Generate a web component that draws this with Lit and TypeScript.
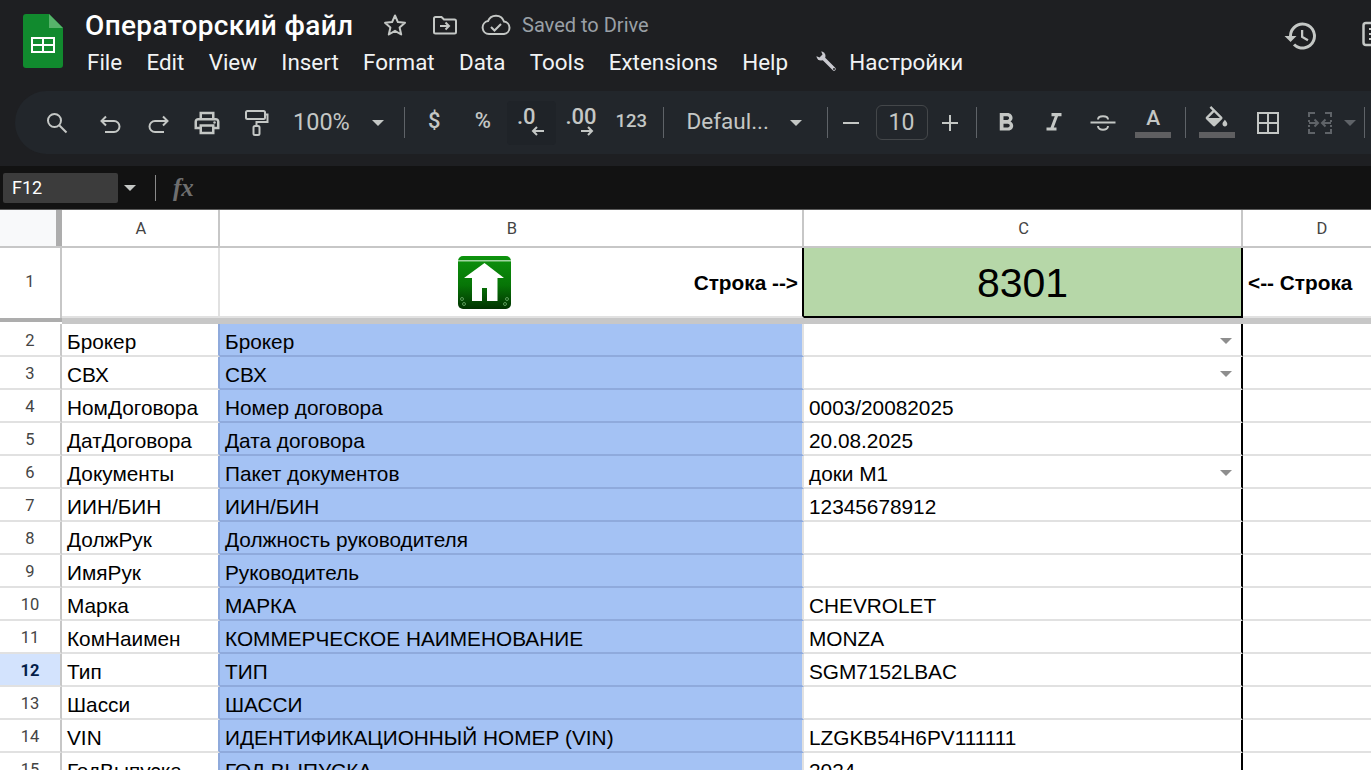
import { LitElement, html, css, svg } from 'lit';
import { customElement } from 'lit/decorators.js';

type Row = { n: number; a: string; b: string; c: string; dd?: boolean; active?: boolean };

const ROWS: Row[] = [
  { n: 2, a: 'Брокер', b: 'Брокер', c: '', dd: true },
  { n: 3, a: 'СВХ', b: 'СВХ', c: '', dd: true },
  { n: 4, a: 'НомДоговора', b: 'Номер договора', c: '0003/20082025' },
  { n: 5, a: 'ДатДоговора', b: 'Дата договора', c: '20.08.2025' },
  { n: 6, a: 'Документы', b: 'Пакет документов', c: 'доки М1', dd: true },
  { n: 7, a: 'ИИН/БИН', b: 'ИИН/БИН', c: '12345678912' },
  { n: 8, a: 'ДолжРук', b: 'Должность руководителя', c: '' },
  { n: 9, a: 'ИмяРук', b: 'Руководитель', c: '' },
  { n: 10, a: 'Марка', b: 'МАРКА', c: 'CHEVROLET' },
  { n: 11, a: 'КомНаимен', b: 'КОММЕРЧЕСКОЕ НАИМЕНОВАНИЕ', c: 'MONZA' },
  { n: 12, a: 'Тип', b: 'ТИП', c: 'SGM7152LBAC', active: true },
  { n: 13, a: 'Шасси', b: 'ШАССИ', c: '' },
  { n: 14, a: 'VIN', b: 'ИДЕНТИФИКАЦИОННЫЙ НОМЕР (VIN)', c: 'LZGKB54H6PV111111' },
  { n: 15, a: 'ГодВыпуска', b: 'ГОД ВЫПУСКА', c: '2024' },
];

const MENU = ['File', 'Edit', 'View', 'Insert', 'Format', 'Data', 'Tools', 'Extensions', 'Help'];

const icon = (size: number, view: number, body: unknown) => html`
  <svg width=${size} height=${size} viewBox="0 0 ${view} ${view}" class="ic">${body}</svg>
`;

const ICONS = {
  logo: html`<svg width="40" height="54" viewBox="0 0 40 54">
    <path fill="#118a2e" d="M3 0h23l14 14v37a3 3 0 0 1-3 3H3a3 3 0 0 1-3-3V3a3 3 0 0 1 3-3z"/>
    <path fill="#57b36b" d="M26 0l14 14H26z"/>
    <path fill="#fff" d="M8 23h24v16H8zm2 2v5h9v-5zm11 0v5h9v-5zM10 32v5h9v-5zm11 0v5h9v-5z" fill-rule="evenodd"/>
  </svg>`,
  star: icon(26, 26, svg`<path fill="none" stroke="#c4c7c5" stroke-width="2" stroke-linejoin="round" d="M13 3.500l2.900 6.600 7.100.7-5.400 4.700 1.600 7-6.200-3.700-6.200 3.700 1.600-7L3 10.800l7.100-.7z"/>`),
  folder: icon(26, 26, svg`<path fill="none" stroke="#c4c7c5" stroke-width="2" d="M2 6.500a1.500 1.500 0 0 1 1.500-1.500h6l2.500 2.500h10.500a1.500 1.500 0 0 1 1.500 1.500v11a1.500 1.500 0 0 1-1.500 1.500h-19a1.500 1.500 0 0 1-1.500-1.500z"/><path fill="none" stroke="#c4c7c5" stroke-width="2" d="M8 14h9M13.500 10.500L17 14l-3.500 3.500"/>`),
  cloud: html`<svg width="30" height="24" viewBox="0 0 30 24"><path fill="none" stroke="#c4c7c5" stroke-width="2" d="M8 21a6.500 6.500 0 0 1-1-12.900A8.500 8.500 0 0 1 23 8.500 6.300 6.300 0 0 1 23 21z"/><path fill="none" stroke="#c4c7c5" stroke-width="2" d="M10 14l3.500 3.500L20 11"/></svg>`,
  history: icon(36, 24, svg`<path fill="#c4c7c5" d="M13 3a9 9 0 0 0-9 9H1l3.900 3.900.1.100L9 12H6a7 7 0 1 1 2.050 4.950l-1.420 1.420A9 9 0 1 0 13 3zm-1 5v5l4.250 2.520.77-1.280-3.520-2.090V8z"/>`),
  panel: html`<svg width="9" height="32" viewBox="0 0 9 32"><rect x="1.500" y="5" width="24" height="22" rx="2.500" fill="none" stroke="#c4c7c5" stroke-width="2.500"/><path stroke="#c4c7c5" stroke-width="2" d="M7 11h14M7 16h14M7 21h14"/></svg>`,
  wrench: html`<svg width="22" height="22" viewBox="0 0 22 22"><path stroke="#c9c9cf" stroke-width="3.500" stroke-linecap="round" d="M6 6l12 12"/><circle cx="5" cy="5" r="4.500" fill="#c9c9cf"/><path fill="#1e1f22" d="M0 0h5l1.500 3.500L3.500 6.500 0 5z"/><circle cx="18" cy="18" r="1" fill="#1e1f22"/></svg>`,
  search: icon(28, 28, svg`<circle cx="11.500" cy="11.500" r="6.500" fill="none" stroke="#c4c7c5" stroke-width="2"/><path stroke="#c4c7c5" stroke-width="2" d="M16.200 16.200l7.300 7.300"/>`),
  undo: icon(28, 28, svg`<path fill="none" stroke="#c4c7c5" stroke-width="2" d="M10 7.500L5.500 12l4.500 4.500M5.500 12H18a5 5 0 0 1 0 11H9"/>`),
  redo: icon(28, 28, svg`<path fill="none" stroke="#c4c7c5" stroke-width="2" d="M18 7.500l4.500 4.500-4.500 4.500M22.500 12H10a5 5 0 0 0 0 11h9"/>`),
  print: icon(30, 24, svg`<path fill="#c4c7c5" d="M19 8h-1V3H6v5H5c-1.660 0-3 1.340-3 3v6h4v4h12v-4h4v-6c0-1.660-1.340-3-3-3zM8 5h8v3H8V5zm8 12v2H8v-4h8v2zm2-2v-2H6v2H4v-4c0-.55.45-1 1-1h14c.55 0 1 .45 1 1v4h-2z"/><circle cx="18" cy="11.500" r="1" fill="#c4c7c5"/>`),
  paint: icon(30, 30, svg`<g fill="none" stroke="#c4c7c5" stroke-width="2"><rect x="5" y="3" width="19" height="8" rx="1.500"/><path d="M24 6.500h2.500V14H15.500v4"/><rect x="12.500" y="18" width="6" height="9" rx="1.500"/></g>`),
  caret: html`<span class="caret"></span>`,
  arrowL: html`<svg width="14" height="10" viewBox="0 0 14 10"><path fill="none" stroke="#c4c7c5" stroke-width="2" d="M13 5H2M6 1L2 5l4 4"/></svg>`,
  arrowR: html`<svg width="14" height="10" viewBox="0 0 14 10"><path fill="none" stroke="#c4c7c5" stroke-width="2" d="M1 5h11M8 1l4 4-4 4"/></svg>`,
  minus: icon(28, 28, svg`<path stroke="#c4c7c5" stroke-width="2" d="M6 14h16"/>`),
  plus: icon(28, 28, svg`<path stroke="#c4c7c5" stroke-width="2" d="M6 14h16M14 6v16"/>`),
  bold: icon(30, 24, svg`<path fill="#c4c7c5" d="M15.600 10.790c.97-.67 1.650-1.770 1.650-2.790 0-2.260-1.750-4-4-4H7v14h7.040c2.090 0 3.710-1.700 3.710-3.790 0-1.520-.86-2.820-2.150-3.420zM10 6.500h3c.83 0 1.500.67 1.500 1.500s-.67 1.500-1.500 1.500h-3v-3zm3.500 9H10v-3h3.500c.83 0 1.500.67 1.500 1.500s-.67 1.500-1.500 1.500z"/>`),
  italic: icon(30, 24, svg`<path fill="#c4c7c5" d="M10 4v2.500h2.600L9.200 15.500H6V18h8v-2.500h-2.200l3.400-9H18V4z"/>`),
  strike: icon(30, 30, svg`<g fill="none" stroke="#c4c7c5" stroke-width="2"><path d="M2.500 14.500h25"/><path d="M10 11.500c0-4.500 10-4.500 10 0"/><path d="M10 18c0 5 10 5 10 0"/></g>`),
  fill: html`<svg width="29" height="24" viewBox="0 0 24 20" class="ic"><path fill="#c4c7c5" d="M16.560 8.940L7.620 0 6.210 1.410l2.380 2.380-5.150 5.150c-.59.59-.59 1.540 0 2.120l5.500 5.500c.29.29.68.44 1.060.44s.77-.15 1.060-.44l5.500-5.500c.59-.58.59-1.530 0-2.120zM5.210 10L10 5.210 14.790 10H5.210zM19 11.500s-2 2.170-2 3.500c0 1.100.9 2 2 2s2-.9 2-2c0-1.330-2-3.500-2-3.500z"/><path fill="#c4c7c5" d="M4 10h12l-6 6z"/></svg>`,
  borders: icon(26, 26, svg`<path fill="none" stroke="#c4c7c5" stroke-width="2" d="M3 3h20v20H3zM13 3v20M3 13h20"/>`),
  merge: icon(30, 30, svg`<g fill="none" stroke="#5f6368" stroke-width="2"><path d="M10 5H4v4M4 12v2M4 17v2M4 21v4h6M20 5h6v4M26 12v2M26 17v2M26 21v4h-6"/><path d="M4 15h9M9.500 11.500L13 15l-3.500 3.500M26 15h-9M20.500 11.500L17 15l3.500 3.500"/></g>`),
};

@customElement('app-root')
export class AppRoot extends LitElement {
  private renderTopbar() {
    return html`
      <header class="top">
        <div class="logo">${ICONS.logo}</div>
        <div class="titles">
          <div class="title-row">
            <span class="doc-title">Операторский файл</span>
            <span class="star">${ICONS.star}</span>
            <span class="folder">${ICONS.folder}</span>
            <span class="cloud">${ICONS.cloud}</span>
            <span class="saved">Saved to Drive</span>
          </div>
          <nav class="menu">
            ${MENU.map((m) => html`<span>${m}</span>`)}
            <span class="custom">${ICONS.wrench}Настройки</span>
          </nav>
        </div>
        <div class="top-right">
          ${ICONS.history}
          ${ICONS.panel}
        </div>
      </header>
    `;
  }

  private renderToolbar() {
    return html`
      <div class="toolbar-wrap">
        <div class="toolbar">
          <span class="b">${ICONS.search}</span>
          <span class="b ml4">${ICONS.undo}</span>
          <span class="b">${ICONS.redo}</span>
          <span class="b">${ICONS.print}</span>
          <span class="b">${ICONS.paint}</span>
          <span class="txt zoom">100%</span>
          <span class="ml21">${ICONS.caret}</span>
          <span class="sep s20"></span>

          <span class="b ml5 t bold-ish up">$</span>
          <span class="b t bold-ish up">%</span>
          <span class="b hover dec">
            <span class="t bold-ish dec-text">.0</span>
            <span class="dec-arrow">${ICONS.arrowL}</span>
          </span>
          <span class="b dec">
            <span class="t bold-ish dec-text">.00</span>
            <span class="dec-arrow">${ICONS.arrowR}</span>
          </span>
          <span class="b ml3 t num up">123</span>
          <span class="sep s7"></span>

          <span class="txt font">Defaul...</span>
          <span class="ml21">${ICONS.caret}</span>
          <span class="sep s25"></span>

          <span class="n ml3">${ICONS.minus}</span>
          <span class="size">10</span>
          <span class="n ml2">${ICONS.plus}</span>
          <span class="sep s6"></span>

          <span class="b ml5">${ICONS.bold}</span>
          <span class="b">${ICONS.italic}</span>
          <span class="b">${ICONS.strike}</span>
          <span class="b color ml2">
            <span class="color-a">A</span>
            <span class="bar"></span>
          </span>
          <span class="sep s7"></span>

          <span class="b ml7 color">
            ${ICONS.fill}
            <span class="bar"></span>
          </span>
          <span class="b ml3">${ICONS.borders}</span>
          <span class="b ml3">${ICONS.merge}</span>
          <span class="caret dim"></span>
          <span class="sep s8"></span>
        </div>
      </div>
    `;
  }

  private renderFormula() {
    return html`
      <div class="formula">
        <div class="namebox">F12</div>
        <span class="name-caret">${ICONS.caret}</span>
        <span class="fsep"></span>
        <span class="fx">fx</span>
      </div>
    `;
  }

  private renderGrid() {
    return html`
      <div class="grid">
        <div class="corner"><span class="corner-bar"></span></div>
        <div class="ch">A</div>
        <div class="ch">B</div>
        <div class="ch">C</div>
        <div class="ch">D</div>

        <div class="rh r1">1</div>
        <div class="c r1"></div>
        <div class="c r1 blk home-cell">
          <svg class="home" width="53" height="53" viewBox="0 0 53 53">
            <defs>
              <linearGradient id="hg" x1="0" y1="0" x2="0" y2="1">
                <stop offset="0" stop-color="#0d930d" />
                <stop offset="0.55" stop-color="#077507" />
                <stop offset="1" stop-color="#013301" />
              </linearGradient>
            </defs>
            <rect width="53" height="53" rx="5" fill="url(#hg)" />
            <rect y="4" width="53" height="1.500" fill="#9fd59f" />
            <path fill="#fff" d="M26.500 7L46 22h-6.500v23H29V32h-5v13H14V22H6z" />
            <g fill="none" stroke="#6fb06f" stroke-width="0.800">
              <circle cx="4" cy="43" r="1.500" /><circle cx="6" cy="48" r="1.500" />
              <circle cx="49" cy="43" r="1.500" /><circle cx="47" cy="48" r="1.500" />
            </g>
          </svg>
          <span class="strong">Строка --&gt;</span>
        </div>
        <div class="c r1 green blk">8301</div>
        <div class="c r1"><span class="strong">&lt;-- Строка</span></div>

        <div class="fz-head"></div>
        <div class="fz"></div>

        ${ROWS.map((r) => html`
          <div class="rh ${r.active ? 'active' : ''}">${r.n}</div>
          <div class="c bleft">${r.a}</div>
          <div class="c blue">${r.b}</div>
          <div class="c blk">
            ${r.c}
            ${r.dd ? html`<span class="dd"></span>` : ''}
          </div>
          <div class="c"></div>
        `)}
      </div>
    `;
  }

  override render() {
    return html`
      ${this.renderTopbar()}
      ${this.renderToolbar()}
      ${this.renderFormula()}
      ${this.renderGrid()}
    `;
  }

  static override styles = css`
    :host {
      display: block;
      width: 1371px;
      height: 770px;
      overflow: hidden;
      background: #fff;
      font-family: Roboto, "Liberation Sans", sans-serif;
    }
    svg {
      display: block;
      flex: none;
    }

    /* title + menu */
    .top {
      height: 90px;
      box-sizing: border-box;
      background: #1e1f22;
      display: flex;
      padding-left: 23px;
      color: #fff;
    }
    .logo {
      padding-top: 14px;
      margin-right: 22px;
    }
    .titles {
      padding-top: 7px;
    }
    .title-row {
      display: flex;
      align-items: center;
      height: 36px;
    }
    .doc-title {
      font-size: 28px;
      font-weight: 500;
      letter-spacing: 0.35px;
      width: 268px;
      white-space: nowrap;
    }
    .star {
      margin-left: 29px;
    }
    .folder {
      margin-left: 24px;
    }
    .cloud {
      margin-left: 23px;
    }
    .saved {
      margin-left: 11px;
      color: #9aa0a6;
      font-size: 20px;
    }
    .menu {
      display: flex;
      gap: 24.300px;
      margin-top: 3px;
      padding-left: 2px;
      font-size: 22.400px;
      line-height: 32px;
      color: #f1f3f4;
      white-space: nowrap;
    }
    .custom {
      display: flex;
      align-items: center;
      gap: 11px;
      margin-left: 4px;
    }
    .top-right {
      margin-left: auto;
      padding-top: 18px;
      display: flex;
      gap: 43px;
      align-items: flex-start;
      flex: none;
    }

    /* toolbar */
    .toolbar-wrap {
      height: 76px;
      box-sizing: border-box;
      background: #1e1f22;
      padding: 1px 0 12px 15px;
    }
    .toolbar {
      height: 63px;
      box-sizing: border-box;
      background: #22262b;
      border-radius: 32px 0 0 32px;
      display: flex;
      align-items: center;
      padding-left: 18px;
      color: #c4c7c5;
      overflow: hidden;
    }
    .b {
      width: 48.500px;
      height: 44px;
      box-sizing: border-box;
      flex: none;
      display: flex;
      align-items: center;
      justify-content: center;
    }
    .up {
      padding-bottom: 4px;
    }
    .n {
      width: 40px;
      flex: none;
      display: flex;
      justify-content: center;
    }
    .ml2 { margin-left: 2px; }
    .ml3 { margin-left: 3px; }
    .ml4 { margin-left: 4.500px; }
    .ml5 { margin-left: 5px; }
    .ml7 { margin-left: 7px; }
    .ml21 { margin-left: 21px; }
    .sep {
      width: 1px;
      height: 31px;
      background: #5f6368;
      flex: none;
    }
    .s6 { margin-left: 6px; }
    .s7 { margin-left: 7px; }
    .s8 { margin-left: 8px; }
    .s20 { margin-left: 20px; }
    .s25 { margin-left: 25px; }
    .txt {
      font-size: 23.500px;
      white-space: nowrap;
      flex: none;
    }
    .zoom {
      margin-left: 13px;
      width: 58px;
      padding-bottom: 1px;
    }
    .font {
      margin-left: 23px;
      width: 82px;
      font-size: 22.500px;
      padding-bottom: 4px;
    }
    .t {
      font-size: 22px;
    }
    .bold-ish {
      font-weight: 500;
    }
    .num {
      font-size: 18.500px;
      font-weight: 500;
    }
    .hover {
      background: #1f2328;
      border-radius: 4px;
    }
    .dec {
      flex-direction: column;
      align-items: flex-start;
      padding-left: 10px;
    }
    .dec-text {
      line-height: 16px;
    }
    .dec-arrow {
      margin: 1px 0 0 14px;
    }
    .caret {
      display: block;
      width: 0;
      height: 0;
      border-left: 6.500px solid transparent;
      border-right: 6.500px solid transparent;
      border-top: 6.500px solid #c4c7c5;
      flex: none;
    }
    .caret.dim {
      border-top-color: #5f6368;
    }
    .size {
      width: 52px;
      height: 35px;
      box-sizing: border-box;
      margin-left: 5px;
      border: 1px solid #44474a;
      border-radius: 6px;
      font-size: 23px;
      line-height: 33px;
      text-align: center;
      flex: none;
    }
    .color {
      flex-direction: column;
      justify-content: flex-end;
      padding-bottom: 7px;
    }
    .color-a {
      font-size: 21px;
      font-weight: 500;
      line-height: 24px;
    }
    .bar {
      width: 36px;
      height: 6px;
      background: #5f5f61;
      margin-top: 2px;
      flex: none;
    }

    /* formula bar */
    .formula {
      height: 44px;
      box-sizing: border-box;
      background: #121212;
      border-bottom: 1px solid #5a5a5a;
      display: flex;
      align-items: center;
      padding-left: 3px;
    }
    .namebox {
      width: 115px;
      height: 30px;
      background: #3c3c3c;
      border-radius: 2px;
      box-sizing: border-box;
      padding-left: 9px;
      color: #fff;
      font-size: 18px;
      line-height: 30px;
    }
    .name-caret {
      margin-left: 6px;
    }
    .fsep {
      width: 1px;
      height: 26px;
      background: #8a8a8a;
      margin-left: 19px;
    }
    .fx {
      margin-left: 17px;
      color: #6f6f6f;
      font-family: "Liberation Serif", serif;
      font-style: italic;
      font-weight: 700;
      font-size: 25px;
    }

    /* sheet */
    .grid {
      display: grid;
      grid-template-columns: 62px 158px 584px 439px 158px;
      grid-auto-rows: 33px;
      grid-template-rows: 38px 70px 6px;
      background: #fff;
      color: #000;
      font-family: "Liberation Sans", Arial, sans-serif;
      font-size: 20.800px;
    }
    .corner {
      background: #f8f9fa;
      border-bottom: 2px solid #c7c7c7;
      display: flex;
      justify-content: flex-end;
    }
    .corner-bar {
      width: 6px;
      background: #adadad;
    }
    .ch {
      display: flex;
      align-items: center;
      justify-content: center;
      box-sizing: border-box;
      padding-left: 2px;
      border-right: 2px solid #c7c7c7;
      border-bottom: 2px solid #c7c7c7;
      color: #444;
      font-family: Roboto, sans-serif;
      font-size: 16.500px;
    }
    .rh {
      display: flex;
      align-items: center;
      justify-content: center;
      border-right: 2px solid #c7c7c7;
      border-bottom: 2px solid #e1e1e1;
      color: #444;
      font-family: Roboto, sans-serif;
      font-size: 16.500px;
      box-sizing: border-box;
      padding-top: 2px;
    }
    .rh.r1 {
      border-bottom: 0;
      padding-top: 0;
      padding-bottom: 4px;
    }
    .rh.active {
      background: #d3e3fd;
      color: #041e49;
      font-weight: 700;
    }
    .c {
      position: relative;
      display: flex;
      align-items: center;
      box-sizing: border-box;
      padding: 5px 5px 0;
      border-right: 2px solid #e1e1e1;
      border-bottom: 2px solid #e1e1e1;
      white-space: nowrap;
      overflow: hidden;
    }
    .bleft {
      border-right-color: #8faadc;
    }
    .blue {
      background: #a4c2f4;
      border-bottom-color: #8faadc;
    }
    .blk {
      border-right-color: #000;
    }
    .r1 {
      padding-top: 0;
    }
    .home-cell {
      padding: 0 4px 0 238px;
      justify-content: space-between;
    }
    .home {
      margin-top: 1px;
    }
    .strong {
      font-weight: 700;
      margin-top: 2px;
    }
    .green {
      background: #b6d7a8;
      border-bottom-color: #000;
      justify-content: center;
      font-size: 41px;
      padding: 2px 0 0;
    }
    .fz-head {
      background: #adadad;
      border-bottom: 2px solid #fff;
      box-sizing: border-box;
    }
    .fz {
      grid-column: 2 / -1;
      background: #c7c7c7;
    }
    .dd {
      position: absolute;
      right: 9px;
      top: 14px;
      width: 0;
      height: 0;
      border-left: 6.500px solid transparent;
      border-right: 6.500px solid transparent;
      border-top: 6.500px solid #8e8e8e;
    }
  `;
}

declare global {
  interface HTMLElementTagNameMap {
    'app-root': AppRoot;
  }
}
